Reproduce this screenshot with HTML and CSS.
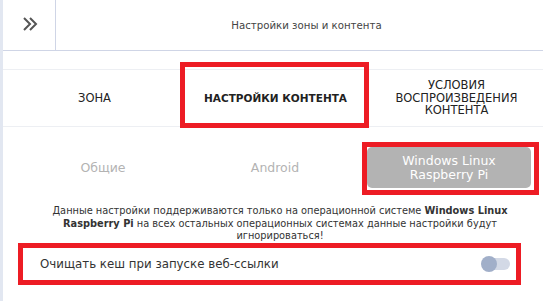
FILE: index.html
```html
<!DOCTYPE html>
<html lang="ru">
<head>
    <meta charset="UTF-8">
    <title>Настройки зоны и контента</title>
    <link rel="stylesheet" href="styles.css">
</head>
<body>
    <div class="panel">
        <!-- Header -->
        <div class="panel-header">
            <div class="collapse-btn">
                <svg width="16" height="14" viewBox="0 0 16 14">
                    <polyline points="2,1 8,7 2,13" fill="none" stroke="#555" stroke-width="2"/>
                    <polyline points="8,1 14,7 8,13" fill="none" stroke="#555" stroke-width="2"/>
                </svg>
            </div>
            <div class="panel-title">Настройки зоны и контента</div>
        </div>

        <!-- Main tabs -->
        <div class="tabs">
            <div class="tab">ЗОНА</div>
            <div class="tab active marked">НАСТРОЙКИ КОНТЕНТА</div>
            <div class="tab">УСЛОВИЯ<br>ВОСПРОИЗВЕДЕНИЯ<br>КОНТЕНТА</div>
        </div>

        <!-- Platform sub tabs -->
        <div class="subtabs">
            <div class="subtab">Общие</div>
            <div class="subtab">Android</div>
            <div class="subtab">
                <div class="subtab-btn marked">Windows Linux<br>Raspberry Pi</div>
            </div>
        </div>

        <p class="info">Данные настройки поддерживаются только на операционной системе <b>Windows Linux Raspberry Pi</b> на всех остальных операционных системах данные настройки будут игнорироваться!</p>

        <div class="option-row">
            <span class="option-label">Очищать кеш при запуске веб-ссылки</span>
            <span class="switch"><span class="switch-knob"></span></span>
        </div>
    </div>
</body>
</html>
```

FILE: styles.css
```css
body {
    margin: 0;
    background-color: #fff;
    font-family: "DejaVu Sans", sans-serif;
    overflow: hidden;
}

.panel {
    width: 554px;
    height: 301px;
    border-left: 3px solid #e2e7f1;
}

.panel-header {
    display: flex;
    height: 50px;
    border-bottom: 1px solid #cfd5e6;
}

.collapse-btn {
    width: 53px;
    border-right: 1px solid #cfd5e6;
    display: flex;
    align-items: center;
    justify-content: center;
    padding-left: 2px;
    padding-bottom: 2px;
    box-sizing: border-box;
}

.panel-title {
    flex: 1;
    display: flex;
    align-items: center;
    justify-content: center;
    font-size: 10.2px;
    color: #444;
}

.tabs {
    display: grid;
    grid-template-columns: 181px 181px 181px;
    margin-top: 18px;
    padding-left: 1px;
    height: 56px;
    border-top: 1px solid #edeff3;
    border-bottom: 1px solid #edeff3;
}

.tab {
    position: relative;
    display: flex;
    align-items: center;
    justify-content: center;
    text-align: center;
    font-size: 11.5px;
    line-height: 12.5px;
    color: #222;
}

.tab.active {
    font-size: 10.5px;
    font-weight: bold;
}

.marked::after {
    content: "";
    position: absolute;
    border: 5px solid #ed1c24;
}

.tab.marked::after {
    top: -8px;
    left: -5px;
    right: -3px;
    bottom: -2px;
}

.subtabs {
    display: grid;
    grid-template-columns: 172px 172px 172px;
    padding-left: 14px;
    margin-top: 20px;
    height: 41px;
}

.subtab {
    display: flex;
    align-items: center;
    justify-content: center;
    font-size: 12.5px;
    color: #b3b3b3;
}

.subtab-btn {
    position: relative;
    width: 164px;
    height: 41px;
    margin-left: 4px;
    background-color: #b3b3b3;
    border-radius: 5px;
    color: #fff;
    display: flex;
    align-items: center;
    justify-content: center;
    text-align: center;
    line-height: 14px;
}

.subtab-btn.marked::after {
    top: -5px;
    left: -5px;
    right: -8px;
    bottom: -7px;
}

.info {
    width: 500px;
    margin: 17px 0 0 27px;
    text-align: center;
    font-size: 9.8px;
    line-height: 12.6px;
    color: #333;
}

.info b {
    font-weight: bold;
}

.option-row {
    display: flex;
    align-items: center;
    justify-content: space-between;
    width: 470px;
    height: 32px;
    margin: 0 0 0 15px;
    padding: 0 6px 0 17px;
    border: 5px solid #ed1c24;
    box-sizing: content-box;
    font-size: 11.8px;
    color: #333;
}

.switch {
    position: relative;
    width: 28px;
    height: 12px;
    border-radius: 6px;
    background-color: #d3d9e6;
}

.switch-knob {
    position: absolute;
    left: -1px;
    top: -2px;
    width: 16px;
    height: 16px;
    border-radius: 50%;
    background-color: #a1afc9;
}
```
